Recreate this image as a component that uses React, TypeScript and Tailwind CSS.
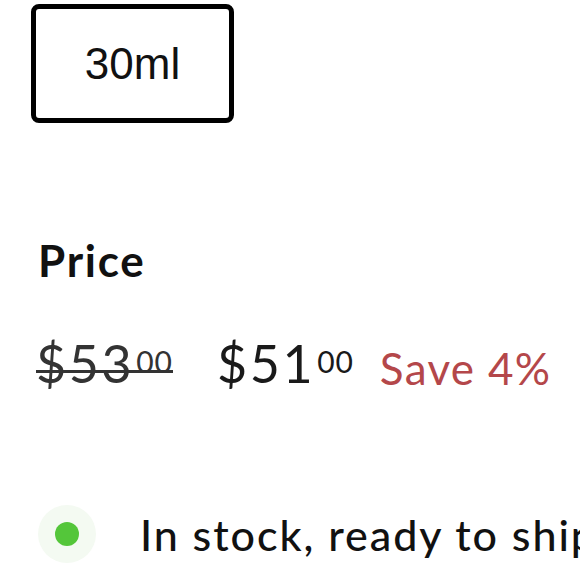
export default function App() {
  return (
    <div className="h-[580px] w-[580px] overflow-hidden bg-white font-['Lato',sans-serif] text-[#111]">
      <div className="pl-[31px] pt-[4px]">
        <button
          type="button"
          className="flex h-[119px] w-[203px] items-center justify-center rounded-[8px] border-[5px] border-black bg-white font-['Liberation_Sans',Arial,sans-serif] text-[44px] leading-none text-[#111]"
        >
          30ml
        </button>
      </div>

      <h2 className="mt-[115px] pl-[38px] text-[44px] font-bold leading-none tracking-[0.04em]">Price</h2>

      <div className="mt-[55px] flex items-start pl-[36px] leading-none">
        <span className="relative flex items-start text-[#333]">
          <span className="text-[52px] leading-none tracking-[0.05em]">$53</span>
          <span className="ml-[2px] mt-[9px] text-[30px] leading-none tracking-[0.03em]">00</span>
          <span className="absolute left-0 right-0 top-[33px] h-[3px] bg-[#333]" />
        </span>
        <span className="ml-[44px] flex items-start text-[#1a1a1a]">
          <span className="text-[52px] leading-none tracking-[0.05em]">$51</span>
          <span className="ml-[2px] mt-[9px] text-[30px] leading-none tracking-[0.03em]">00</span>
        </span>
        <span className="ml-[26px] mt-[9px] text-[44px] leading-none tracking-[0.03em] text-[#b4474a]">Save 4%</span>
      </div>

      <div className="mt-[115px] flex items-center pl-[38px]">
        <span className="flex h-[58px] w-[58px] shrink-0 items-center justify-center rounded-full bg-[#f4faf2]">
          <span className="h-[24px] w-[24px] rounded-full bg-[#54c63a]" />
        </span>
        <span className="ml-[44px] whitespace-nowrap text-[43px] font-medium leading-none tracking-[0.045em]">
          In stock, ready to ship
        </span>
      </div>
    </div>
  );
}
